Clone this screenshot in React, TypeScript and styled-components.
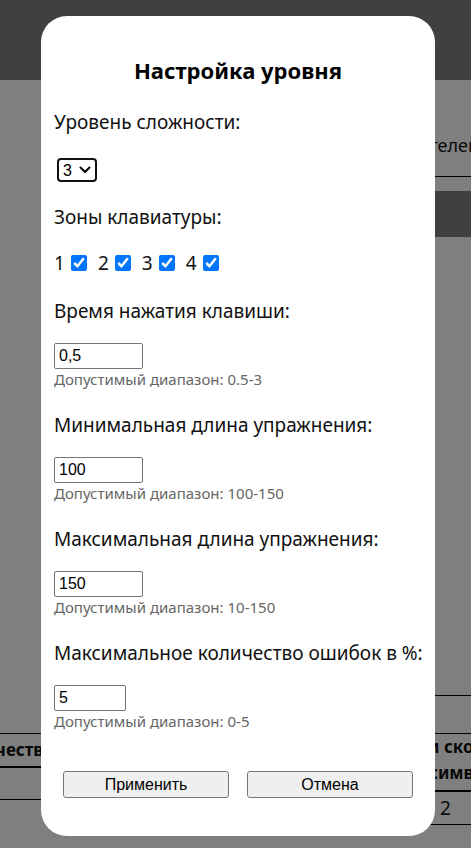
import React from "react";
import styled, { createGlobalStyle } from "styled-components";

const Global = createGlobalStyle`
  html, body { margin: 0; padding: 0; }
  body {
    width: 471px;
    height: 848px;
    overflow: hidden;
    background: #ffffff;
    font-family: "Noto Sans", "Open Sans", sans-serif;
    color: #111;
  }
  * { box-sizing: border-box; }
`;

/* ---------- background page ---------- */

const Page = styled.div`
  width: 471px;
  height: 848px;
  overflow: hidden;
  display: flex;
  flex-direction: column;
`;

const Header = styled.header`
  height: 80px;
  background: #808080;
  flex: none;
`;

const NavRow = styled.nav`
  margin: 0 0 0 250px;
  height: 97px;
  border-bottom: 1px solid #000;
  display: flex;
  align-items: flex-end;
  padding-bottom: 19px;
  white-space: nowrap;
  font-size: 18px;
  line-height: 24px;
  flex: none;
`;

const NavText = styled.span`
  margin-left: 83px;
`;

const DarkBar = styled.div`
  margin: 14px 0 0 250px;
  height: 46px;
  background: #808080;
  flex: none;
`;

const TableRow = styled.div`
  margin-top: 458px;
  display: flex;
  align-items: flex-start;
  margin-left: -57px;
  flex: none;
`;

const Column = styled.div<{ $w: number; $top?: number }>`
  width: ${(p) => p.$w}px;
  margin-top: ${(p) => p.$top ?? 0}px;
  flex: none;
`;

const TopRule = styled.div`
  height: 38px;
  border-top: 1px solid #000;
`;

const HeadCell = styled.div<{ $pt: number; $pb: number; $pl: number }>`
  border-top: 1px solid #000;
  border-bottom: 2px solid #000;
  padding: ${(p) => p.$pt}px 8px ${(p) => p.$pb}px ${(p) => p.$pl}px;
  font-weight: 700;
  font-size: 17px;
  white-space: nowrap;
`;

const HeadLine = styled.div<{ $lh: number; $indent?: number }>`
  line-height: ${(p) => p.$lh}px;
  padding-left: ${(p) => p.$indent ?? 0}px;
`;

const BodyCell = styled.div<{ $h: number; $pl: number }>`
  height: ${(p) => p.$h}px;
  border-bottom: 1px solid #000;
  padding: 0 8px 0 ${(p) => p.$pl}px;
  font-size: 19px;
  display: flex;
  align-items: center;
`;

/* ---------- modal ---------- */

const Overlay = styled.div`
  position: fixed;
  inset: 0;
  background: rgba(0, 0, 0, 0.5);
  display: flex;
  align-items: flex-start;
  justify-content: flex-start;
  padding: 16px 0 0 41px;
`;

const Modal = styled.div`
  width: 394px;
  background: #fff;
  border-radius: 26px;
  padding: 40px 13px 38px;
  display: flex;
  flex-direction: column;
  align-items: flex-start;
`;

const Title = styled.h2`
  align-self: stretch;
  margin: 0 0 26px;
  text-align: center;
  font-size: 22px;
  line-height: 28px;
  font-weight: 700;
  color: #000;
`;

const Label = styled.label<{ $mb: number }>`
  display: block;
  font-size: 19px;
  line-height: 24px;
  color: #111;
  white-space: nowrap;
  margin-bottom: ${(p) => p.$mb}px;
`;

const SelectWrap = styled.div`
  position: relative;
  margin: 0 0 23px 3px;
  width: 40px;
  height: 24px;
`;

const Select = styled.select`
  appearance: none;
  -webkit-appearance: none;
  width: 40px;
  height: 24px;
  border: 2px solid #111;
  border-radius: 4px;
  background: #fff;
  padding: 0 0 0 4px;
  font-family: "Liberation Sans", Arial, sans-serif;
  font-size: 16px;
  color: #000;
  outline: none;
`;

const Chevron = styled.svg`
  position: absolute;
  right: 6px;
  top: 8px;
  pointer-events: none;
`;

const CheckRow = styled.div`
  display: flex;
  align-items: center;
  height: 24px;
  gap: 11px;
  margin-bottom: 24px;
  font-size: 19px;
`;

const CheckItem = styled.label`
  display: inline-flex;
  align-items: center;
`;

const Check = styled.input`
  width: 16px;
  height: 16px;
  margin: 0 0 0 6px;
  accent-color: #0075ff;
`;

const Field = styled.div<{ $last?: boolean }>`
  display: flex;
  flex-direction: column;
  align-items: flex-start;
  margin-bottom: ${(p) => (p.$last ? 40 : 24)}px;
`;

const TextInput = styled.input<{ $w: number }>`
  width: ${(p) => p.$w}px;
  height: 26px;
  border: 1px solid #767676;
  border-radius: 2px;
  padding: 0 4px;
  font-family: "Liberation Sans", Arial, sans-serif;
  font-size: 16px;
  color: #000;
  margin-top: 20px;
  outline: none;
`;

const Hint = styled.small`
  display: block;
  margin-top: 1px;
  font-size: 15px;
  line-height: 19px;
  color: #666;
`;

const Buttons = styled.div`
  align-self: center;
  display: flex;
  gap: 18px;
`;

const Button = styled.button`
  width: 166px;
  height: 27px;
  background: #efefef;
  border: 1px solid #767676;
  border-radius: 3px;
  font-family: "Liberation Sans", Arial, sans-serif;
  font-size: 16px;
  color: #000;
  padding: 0;
`;

const fields = [
  { label: "Время нажатия клавиши:", value: "0,5", hint: "Допустимый диапазон: 0.5-3", w: 89 },
  { label: "Минимальная длина упражнения:", value: "100", hint: "Допустимый диапазон: 100-150", w: 89 },
  { label: "Максимальная длина упражнения:", value: "150", hint: "Допустимый диапазон: 10-150", w: 89 },
  { label: "Максимальное количество ошибок в %:", value: "5", hint: "Допустимый диапазон: 0-5", w: 72 },
];

export default function App() {
  return (
    <>
      <Global />
      <Page>
        <Header />
        <NavRow>
          <NavText>Преподавателей</NavText>
        </NavRow>
        <DarkBar />
        <TableRow>
          <Column $w={477} $top={38}>
            <HeadCell $pt={5} $pb={5} $pl={8}>
              <HeadLine $lh={22}>Количество</HeadLine>
            </HeadCell>
            <BodyCell $h={32} $pl={8} />
          </Column>
          <Column $w={140}>
            <TopRule />
            <HeadCell $pt={0} $pb={4} $pl={8}>
              <HeadLine $lh={26}>и скорость</HeadLine>
              <HeadLine $lh={26} $indent={1}>символов</HeadLine>
            </HeadCell>
            <BodyCell $h={33} $pl={20}>2</BodyCell>
          </Column>
        </TableRow>
      </Page>
      <Overlay>
        <Modal>
          <Title>Настройка уровня</Title>
          <Label $mb={24}>Уровень сложности:</Label>
          <SelectWrap>
            <Select defaultValue="3">
              <option value="1">1</option>
              <option value="2">2</option>
              <option value="3">3</option>
              <option value="4">4</option>
              <option value="5">5</option>
            </Select>
            <Chevron width="12" height="8" viewBox="0 0 12 8">
              <path d="M1.5 1.5 L6 6 L10.5 1.5" fill="none" stroke="#000" strokeWidth="2" strokeLinecap="round" strokeLinejoin="round" />
            </Chevron>
          </SelectWrap>
          <Label $mb={22}>Зоны клавиатуры:</Label>
          <CheckRow>
            {[1, 2, 3, 4].map((n) => (
              <CheckItem key={n}>
                {n}
                <Check type="checkbox" defaultChecked />
              </CheckItem>
            ))}
          </CheckRow>
          {fields.map((f, i) => (
            <Field key={f.label} $last={i === fields.length - 1}>
              <Label $mb={0}>{f.label}</Label>
              <TextInput $w={f.w} defaultValue={f.value} />
              <Hint>{f.hint}</Hint>
            </Field>
          ))}
          <Buttons>
            <Button>Применить</Button>
            <Button>Отмена</Button>
          </Buttons>
        </Modal>
      </Overlay>
    </>
  );
}
